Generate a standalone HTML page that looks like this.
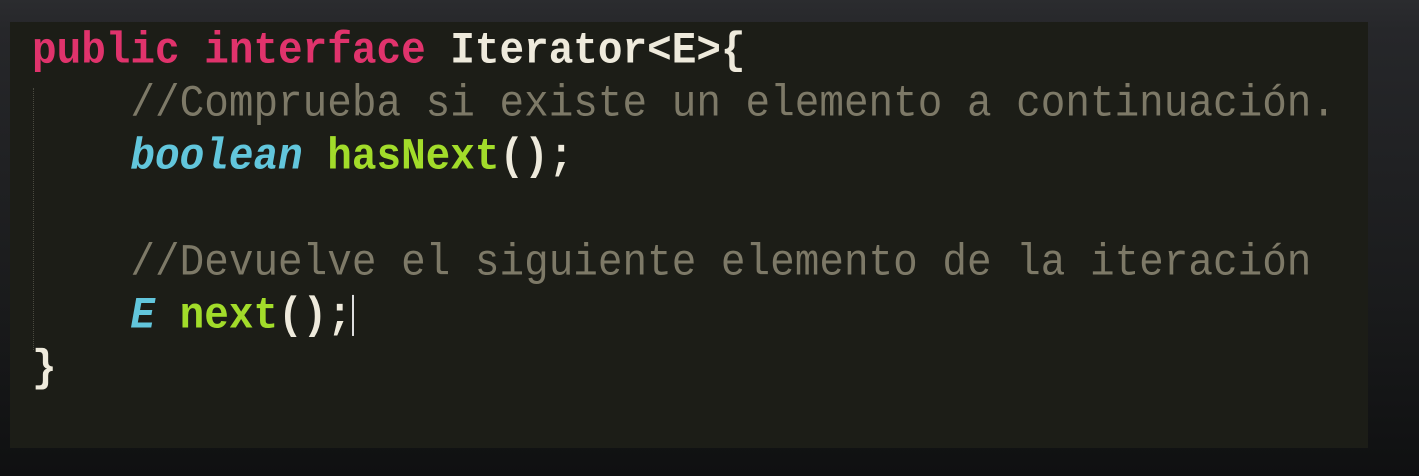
<!DOCTYPE html>
<html><head><meta charset="utf-8"><style>
html,body{margin:0;padding:0;}
body{width:1419px;height:476px;overflow:hidden;background:linear-gradient(#2b2c2f 0px,#26272a 30px,#1a1b1c 300px,#0f1011 476px);position:relative;}
.panel{position:absolute;left:10px;top:22px;width:1358px;height:426px;background:#1c1d17;}
.code{position:absolute;left:32px;top:26px;font-family:"Liberation Mono",monospace;font-size:41px;line-height:49px;white-space:pre;color:#eeeadc;font-weight:bold;transform:scaleY(1.08);transform-origin:0 0;}
.k{color:#e0336c}.c{color:#7d7967;font-weight:normal}.t{color:#62c6dc;font-style:italic}.f{color:#a2dc2a}
.guide{position:absolute;left:33px;top:88px;height:262px;border-left:1px dotted #4a4a40;}
.cur{display:inline-block;width:2px;height:38px;background:#ddd;vertical-align:-8px;}
</style></head><body>
<div class="panel"></div>
<div class="guide"></div>
<div class="code"><span class="k">public</span> <span class="k">interface</span> Iterator&lt;E&gt;{
    <span class="c">//Comprueba si existe un elemento a continuación.</span>
    <span class="t">boolean</span> <span class="f">hasNext</span>();

    <span class="c">//Devuelve el siguiente elemento de la iteración</span>
    <span class="t">E</span> <span class="f">next</span>();<span class="cur"></span>
}</div>
</body></html>
